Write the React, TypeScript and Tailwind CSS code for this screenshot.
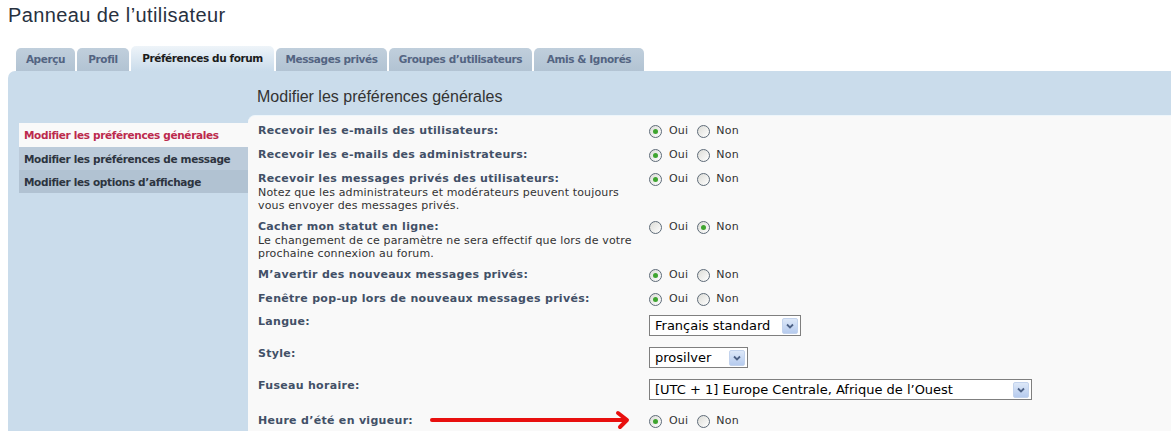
import React from "react";

type Row =
	| { label: string; desc?: string[]; kind: "radio"; yes: boolean; extra?: string }
	| { label: string; desc?: string[]; kind: "select"; value: string; width: string; extra?: string };

const tabs = [
	{ name: "Aperçu", w: "w-[59px]" },
	{ name: "Profil", w: "w-[52px]" },
	{ name: "Préférences du forum", w: "w-[143px]", active: true },
	{ name: "Messages privés", w: "w-[111px]" },
	{ name: "Groupes d’utilisateurs", w: "w-[143px]" },
	{ name: "Amis & Ignorés", w: "w-[110px]" },
];

const menu = [
	{ name: "Modifier les préférences générales", cls: "bg-[#f9f9f9] text-[#bc2a4d] h-[24px]" },
	{ name: "Modifier les préférences de message", cls: "bg-[#bccbda] text-[#2d3440] h-[23px]" },
	{ name: "Modifier les options d’affichage", cls: "bg-[#b1c2d2] text-[#2d3440] h-[23px]" },
];

const rows: Row[] = [
	{ label: "Recevoir les e-mails des utilisateurs:", kind: "radio", yes: true },
	{ label: "Recevoir les e-mails des administrateurs:", kind: "radio", yes: true },
	{
		label: "Recevoir les messages privés des utilisateurs:",
		desc: ["Notez que les administrateurs et modérateurs peuvent toujours", "vous envoyer des messages privés."],
		kind: "radio",
		yes: true,
	},
	{
		label: "Cacher mon statut en ligne:",
		desc: ["Le changement de ce paramètre ne sera effectif que lors de votre", "prochaine connexion au forum."],
		kind: "radio",
		yes: false,
	},
	{ label: "M’avertir des nouveaux messages privés:", kind: "radio", yes: true },
	{ label: "Fenêtre pop-up lors de nouveaux messages privés:", kind: "radio", yes: true },
	{ label: "Langue:", kind: "select", value: "Français standard", width: "w-[152px]" },
	{ label: "Style:", kind: "select", value: "prosilver", width: "w-[99px]" },
	{ label: "Fuseau horaire:", kind: "select", value: "[UTC + 1] Europe Centrale, Afrique de l’Ouest", width: "w-[383px]" },
	{ label: "Heure d’été en vigueur:", kind: "radio", yes: true, extra: "mt-[2px]" },
];

const Radio = ({ checked }: { checked: boolean }) => (
	<span className="w-[13px] h-[13px] rounded-full border border-[#5e6b78] bg-gradient-to-br from-[#dcdcd7] to-white flex items-center justify-center">
		{checked && <span className="w-[5px] h-[5px] rounded-full bg-[#3fa52f]" />}
	</span>
);

const Select = ({ value, width }: { value: string; width: string }) => (
	<div className={`${width} h-[21px] border border-[#7f7f7f] bg-white flex items-center pl-[5px] pr-[2px]`}>
		<span className="flex-1 text-[13px] text-black truncate">{value}</span>
		<span className="w-[16px] h-[16px] rounded-[2px] bg-gradient-to-b from-[#dde8f8] to-[#b6cbee] border border-[#c3d3ed] flex items-center justify-center">
			<svg width="8" height="6" viewBox="0 0 8 6">
				<path d="M1 1.5 L4 4.5 L7 1.5" fill="none" stroke="#4d6185" strokeWidth="1.8" />
			</svg>
		</span>
	</div>
);

export default function App() {
	return (
		<div className="w-[1171px] h-[431px] overflow-hidden bg-white font-['DejaVu_Sans',Verdana,sans-serif] relative">
			<h1 className="pl-[8px] pt-[3px] h-[46px] text-[20px] leading-[24px] tracking-[0.4px] text-[#28313f] font-['Liberation_Sans',Arial,sans-serif]">
				Panneau de l’utilisateur
			</h1>

			{/* tab strip */}
			<div className="flex items-end gap-[2px] pl-[16px] h-[25px]">
				{tabs.map((t) =>
					t.active ? (
						<div
							key={t.name}
							className={`${t.w} h-[25px] rounded-t-[5px] bg-gradient-to-b from-[#eef4f9] to-[#cadceb] flex items-center justify-center text-[10.5px] font-bold text-[#1c1c1c] tracking-[-0.4px]`}
						>
							{t.name}
						</div>
					) : (
						<div
							key={t.name}
							className={`${t.w} h-[23px] rounded-t-[5px] bg-gradient-to-b from-[#c0cfdc] to-[#b2c3d3] flex items-center justify-center text-[10.5px] font-bold text-[#536482] tracking-[-0.4px]`}
						>
							{t.name}
						</div>
					)
				)}
			</div>

			{/* panel */}
			<div className="ml-[8px] bg-[#cadceb] rounded-tl-[7px] h-[360px]">
				<div className="h-[44px] pl-[249px] flex items-center pt-[8px] text-[16px] text-[#333] font-['Liberation_Sans',Arial,sans-serif]">
					Modifier les préférences générales
				</div>
				<div className="flex h-full">
					<div className="w-[240px] pl-[11px] pt-[8px] flex flex-col">
						{menu.map((m) => (
							<div key={m.name} className={`${m.cls} flex items-center pl-[5px] pt-[2px] text-[10.5px] font-bold tracking-[-0.35px]`}>
								{m.name}
							</div>
						))}
					</div>
					<div className="flex-1 bg-[#f9f9f9] rounded-tl-[7px] border-t border-[#eef6fb] pt-[3px] pl-[10px]">
						{rows.map((r) => (
							<div
								key={r.label}
								className={`grid grid-cols-[391px_1fr] ${r.extra ?? ""} ${r.kind === "select" ? "pt-[4px] pb-[7px]" : r.desc ? "pt-[5px] pb-[3px]" : "py-[5px]"}`}
							>
								<div>
									<div className="text-[11px] leading-[14px] font-bold text-[#425067] tracking-[0.3px]">{r.label}</div>
									{r.desc?.map((d) => (
										<div key={d} className="text-[11px] leading-[13px] text-[#333] tracking-[0.15px]">
											{d}
										</div>
									))}
								</div>
								{r.kind === "radio" ? (
									<div className="h-[14px] flex items-center text-[11px] text-[#333] tracking-[0.2px]">
										<Radio checked={r.yes} />
										<span className="ml-[7px] mr-[9px]">Oui</span>
										<Radio checked={!r.yes} />
										<span className="ml-[6px]">Non</span>
									</div>
								) : (
									<Select value={r.value} width={r.width} />
								)}
							</div>
						))}
					</div>
				</div>
			</div>

			{/* red annotation arrow */}
			<svg className="absolute left-[428px] top-[410px]" width="206" height="20" viewBox="0 0 206 20">
				<path d="M4 10 L196 10" stroke="#e8100f" strokeWidth="4" strokeLinecap="round" />
				<path d="M190 3 L199 10 L192 17" fill="none" stroke="#e8100f" strokeWidth="4" strokeLinecap="round" strokeLinejoin="round" />
			</svg>
		</div>
	);
}
